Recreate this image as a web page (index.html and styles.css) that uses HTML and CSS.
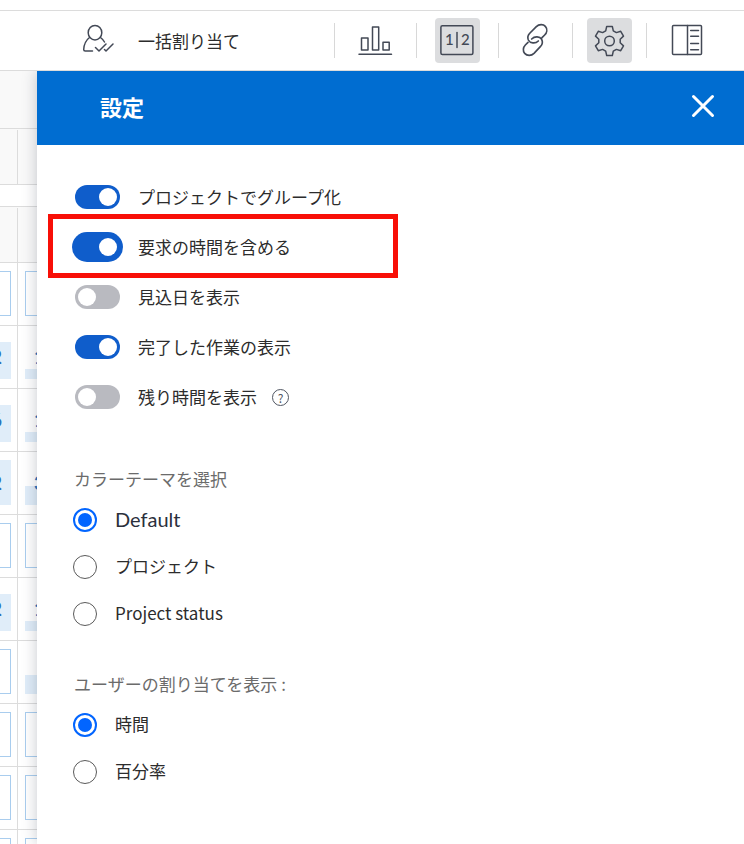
FILE: index.html
```html
<!DOCTYPE html>
<html lang="ja">
<head>
<meta charset="utf-8">
<meta name="viewport" content="width=device-width, initial-scale=1">
<title>設定</title>
<link rel="stylesheet" href="styles.css">
</head>
<body>
<header class="toolbar">
  <button class="assign" type="button">
    <svg class="icon" width="32" height="33" viewBox="0 0 32 33" aria-hidden="true">
      <ellipse cx="13" cy="8.700" rx="6.800" ry="7.300"/>
      <path d="M7.500 13.500C3.500 16.500 2 20.500 1.700 25.500Q1.700 27 3.200 27H10.500M18.500 13.500Q21 15.300 22.500 18M13.500 23.500L17 27L24 20M22.500 25.500L24 27L31 20"/>
    </svg>
    <span>一括割り当て</span>
  </button>
  <ul class="tools">
    <li class="tool tool-wide">
      <button class="tool-button" type="button" aria-label="グラフ">
        <svg class="icon" width="45" height="45" viewBox="0 0 45 45">
          <path d="M6 36.200H38.500M8.500 20H15V32H8.500ZM19.500 9H25.700V32H19.500ZM30 24.300H36.200V32H30Z"/>
        </svg>
      </button>
    </li>
    <li class="tool tool-wide">
      <button class="tool-button is-active" type="button" aria-label="数値">
        <svg class="icon" width="45" height="45" viewBox="0 0 45 45">
          <rect x="5.900" y="7.800" width="32" height="28.800" rx="1.500"/>
          <path d="M22 14.500V29.500"/>
          <text x="10" y="27">1</text>
          <text x="26" y="27">2</text>
        </svg>
      </button>
    </li>
    <li class="tool">
      <button class="tool-button" type="button" aria-label="リンク">
        <svg class="icon" width="45" height="45" viewBox="-21 54 135 135">
          <path class="thick" d="M55 123C46 132 30 130 25 120C22 113 24 105 30 99L49 80C57 72 70 72 76 79C83 87 81 98 74 105L66 113M35 117C44 108 59 109 65 118C69 126 67 134 61 140L42 160C34 168 21 168 14 160C8 153 9 142 16 135L24 127"/>
        </svg>
      </button>
    </li>
    <li class="tool">
      <button class="tool-button is-active" type="button" aria-label="設定">
        <svg class="icon" width="45" height="45" viewBox="-22.500 -23 45 45">
          <circle r="4.800"/>
          <path d="M-2.800-14.600H2.800L3.800-10.200L6.900-8.400L11.200-9.700L14-4.900L10.700-1.800V1.800L14 4.900L11.200 9.700L6.900 8.400L3.800 10.200L2.800 14.600H-2.800L-3.800 10.200L-6.900 8.400L-11.200 9.700L-14 4.900L-10.700 1.800V-1.800L-14-4.900L-11.200-9.700L-6.900-8.400L-3.800-10.200Z"/>
        </svg>
      </button>
    </li>
    <li class="tool tool-last">
      <button class="tool-button" type="button" aria-label="パネル">
        <svg class="icon" width="45" height="45" viewBox="0 0 45 45">
          <rect x="7.500" y="7.600" width="29" height="28.800" rx="1"/>
          <path d="M22.500 7.600V36.400M25.700 12.400H33.500M25.700 18.200H33.500M25.700 25.500H33.500M25.700 31.700H33.500"/>
        </svg>
      </button>
    </li>
  </ul>
</header>

<div class="workspace">
  <div class="schedule" aria-hidden="true">
    <div class="schedule-rows">
      <div class="head head-top"></div>
      <div class="head head-split"><span></span></div>
      <div class="head head-gap"></div>
      <div class="head head-split"><span></span></div>
      <div class="row"><div class="cell"><i class="slot"></i></div><div class="cell"><i class="slot"></i></div></div>
      <div class="row"><div class="cell"><i class="fill fill-m"></i><b>2</b></div><div class="cell"><i class="fill fill-s"></i><b>1</b></div></div>
      <div class="row"><div class="cell"><i class="fill fill-m"></i><b>6</b></div><div class="cell"><i class="fill fill-s"></i><b>1</b></div></div>
      <div class="row"><div class="cell"><i class="fill fill-l"></i><b>2</b></div><div class="cell"><i class="fill fill-h"></i><b>3</b></div></div>
      <div class="row"><div class="cell"><i class="slot"></i></div><div class="cell"><i class="slot"></i></div></div>
      <div class="row"><div class="cell"><i class="fill fill-m"></i><b>2</b></div><div class="cell"><i class="fill fill-s"></i><b>1</b></div></div>
      <div class="row"><div class="cell"><i class="slot"></i></div><div class="cell"><i class="fill fill-h"></i></div></div>
      <div class="row"><div class="cell"><i class="slot"></i></div><div class="cell"><i class="slot"></i></div></div>
      <div class="row"><div class="cell"><i class="slot"></i></div><div class="cell"><i class="slot"></i></div></div>
      <div class="row"><div class="cell"><i class="slot"></i></div><div class="cell"><i class="slot"></i></div></div>
    </div>
  </div>

  <main class="panel">
    <div class="panel-header">
      <h1>設定</h1>
      <button class="close" type="button" aria-label="閉じる">
        <svg width="24" height="24" viewBox="0 0 24 24"><path d="M2.500 2.500L21.500 21.500M21.500 2.500L2.500 21.500"/></svg>
      </button>
    </div>
    <form class="panel-body">
      <div class="switches">
        <div class="switch-row">
          <input class="switch" type="checkbox" id="group" checked>
          <label for="group">プロジェクトでグループ化</label>
        </div>
        <div class="switch-row highlighted">
          <input class="switch switch-large" type="checkbox" id="hours" checked>
          <label for="hours">要求の時間を含める</label>
        </div>
        <div class="switch-row">
          <input class="switch" type="checkbox" id="projected">
          <label for="projected">見込日を表示</label>
        </div>
        <div class="switch-row">
          <input class="switch" type="checkbox" id="completed" checked>
          <label for="completed">完了した作業の表示</label>
        </div>
        <div class="switch-row">
          <input class="switch" type="checkbox" id="remaining">
          <label for="remaining">残り時間を表示</label>
          <button class="help" type="button">?</button>
        </div>
      </div>

      <fieldset class="theme">
        <legend>カラーテーマを選択</legend>
        <div class="radio-row">
          <input type="radio" name="theme" id="theme-default" checked>
          <label class="latin" for="theme-default">Default</label>
        </div>
        <div class="radio-row">
          <input type="radio" name="theme" id="theme-project">
          <label for="theme-project">プロジェクト</label>
        </div>
        <div class="radio-row">
          <input type="radio" name="theme" id="theme-status">
          <label for="theme-status">Project status</label>
        </div>
      </fieldset>

      <fieldset>
        <legend>ユーザーの割り当てを表示 :</legend>
        <div class="radio-row">
          <input type="radio" name="unit" id="unit-hours" checked>
          <label for="unit-hours">時間</label>
        </div>
        <div class="radio-row">
          <input type="radio" name="unit" id="unit-percent">
          <label for="unit-percent">百分率</label>
        </div>
      </fieldset>
    </form>
  </main>
</div>
</body>
</html>
```
FILE: styles.css
```css
*,
*::before,
*::after {
  box-sizing: border-box;
}

body {
  display: flex;
  flex-direction: column;
  min-height: 100vh;
  margin: 0;
  padding-top: 10px;
  background: #fff;
  color: #2c2c2c;
  font-family: "Noto Sans CJK JP", "Noto Sans", sans-serif;
  font-size: 17px;
  line-height: 26px;
}

button {
  padding: 0;
  border: 0;
  background: none;
  color: inherit;
  font: inherit;
  cursor: pointer;
}

svg {
  display: block;
}

/* Toolbar */
.toolbar {
  position: relative;
  z-index: 1;
  display: flex;
  align-items: center;
  justify-content: space-between;
  padding: 7px 0 7px 82px;
  border-top: 1px solid #dcdcdc;
  border-bottom: 1px solid #dcdcdc;
  background: #fff;
}

.assign {
  display: flex;
  align-items: center;
  gap: 24px;
  white-space: nowrap;
}

.icon {
  fill: none;
  stroke: #434956;
  stroke-width: 1.5;
  stroke-linecap: round;
  stroke-linejoin: round;
}

.icon .thick {
  stroke-width: 5;
}

.icon text {
  fill: #434956;
  stroke: none;
  font-family: Lato, sans-serif;
  font-size: 15px;
  font-weight: 500;
}

.tools {
  display: flex;
  margin: 0;
  padding: 0;
  list-style: none;
}

.tool {
  display: flex;
  align-items: center;
  padding: 0 14px;
}

.tool-wide {
  padding: 0 18px;
}

.tool-last {
  padding: 0 34px 0 18px;
}

.tool::before {
  width: 1px;
  height: 35px;
  margin-left: -14px;
  margin-right: 14px;
  background: #d8d8d8;
  content: "";
}

.tool-wide::before,
.tool-last::before {
  margin-left: -18px;
  margin-right: 18px;
}

.tool-button {
  width: 45px;
  height: 45px;
  border-radius: 4px;
}

.tool-button.is-active {
  background: #dcdddf;
}

.workspace {
  display: flex;
  flex: 1;
}

/* Schedule grid behind the panel */
.schedule {
  position: relative;
  flex: 0 0 37px;
  overflow: hidden;
}

.schedule-rows {
  position: absolute;
  inset: 0;
}

.head {
  display: flex;
  height: 56px;
  border-bottom: 1px solid #dcdcdc;
  background: #f9f9f9;
}

.head-top {
  height: 58px;
}

.head-gap {
  height: 22px;
  background: #fff;
}

.head-split span {
  width: 18px;
  margin-top: 1px;
  border-right: 1px solid #dcdcdc;
}

.row {
  display: grid;
  grid-template-columns: 18px minmax(0, 1fr);
  height: 63px;
  border-bottom: 1px solid #dcdcdc;
}

.cell {
  display: grid;
  grid-template-columns: minmax(0, 1fr);
  align-items: end;
  padding: 8px 0 9px 7px;
}

.cell:first-child {
  padding: 8px 6px 9px 0;
  border-right: 1px solid #dcdcdc;
}

.cell > * {
  grid-area: 1 / 1;
}

.slot {
  height: 45px;
  border: 1px solid #a9cdee;
  border-right: 0;
}

.cell:first-child .slot {
  border-right: 1px solid #a9cdee;
  border-left: 0;
}

.fill {
  background: #e0edf9;
}

.fill-s {
  height: 10px;
}

.fill-h {
  height: 19px;
}

.fill-m {
  height: 37px;
}

.fill-l {
  height: 45px;
}

.cell b {
  align-self: center;
  padding-left: 9px;
  color: #2c73b9;
  font-family: Lato, sans-serif;
  font-size: 18px;
  font-weight: 700;
}

.cell:first-child b {
  justify-self: end;
  padding: 0 9px 0 0;
}

/* Settings panel */
.panel {
  position: relative;
  flex: 1;
  min-width: 0;
  background: #fff;
  box-shadow: 0 0 14px rgba(30, 40, 60, 0.25);
}

.panel-header {
  display: flex;
  align-items: center;
  justify-content: space-between;
  height: 74px;
  padding: 0 29px 4px 63px;
  background: #006dd1;
  color: #fff;
}

h1 {
  margin: 0;
  font-size: 22px;
  font-weight: 700;
  line-height: 32px;
}

.close path {
  fill: none;
  stroke: #fff;
  stroke-width: 3;
  stroke-linecap: round;
}

.panel-body {
  padding: 27px 35px;
}

.switch-row {
  position: relative;
  display: grid;
  grid-template-columns: 51px auto 1fr;
  align-items: center;
  column-gap: 15px;
  height: 50px;
}

.highlighted::after {
  position: absolute;
  top: -8px;
  left: -24px;
  width: 350px;
  height: 64px;
  border: 5px solid #f80f07;
  content: "";
  pointer-events: none;
}

.switch {
  display: flex;
  align-items: center;
  justify-self: center;
  width: 45px;
  height: 24px;
  margin: 0;
  padding: 0 3px;
  border-radius: 15px;
  background: #b9bac0;
  appearance: none;
}

.switch::before {
  width: 18px;
  height: 18px;
  border-radius: 50%;
  background: #fff;
  content: "";
}

.switch:checked {
  justify-content: flex-end;
  background: #0f5dcb;
}

.switch-large {
  width: 51px;
  height: 30px;
  padding: 0 6px;
}

.help {
  width: 17px;
  height: 17px;
  border: 1px solid #505662;
  border-radius: 50%;
  color: #505662;
  font-size: 12px;
  line-height: 15px;
}

fieldset {
  min-width: 0;
  margin: 30px 0 0;
  padding: 0 0 0 1px;
  border: 0;
}

.theme {
  margin-top: 40px;
}

legend {
  padding: 0 0 0 1px;
  color: #6b6b6b;
  line-height: 34px;
}

.radio-row {
  display: flex;
  align-items: center;
  gap: 18px;
  height: 47px;
}

.radio-row label {
  padding-bottom: 2px;
}

.radio-row input {
  display: grid;
  place-content: center;
  width: 24px;
  height: 24px;
  margin: 0;
  border: 1px solid #5a5a5a;
  border-radius: 50%;
  appearance: none;
}

.radio-row input:checked {
  border: 2px solid #0265ff;
}

.radio-row input:checked::before {
  width: 14px;
  height: 14px;
  border-radius: 50%;
  background: #0265ff;
  content: "";
}

.latin {
  color: #2b303c;
  font-family: Lato, sans-serif;
  font-size: 20px;
}
```
